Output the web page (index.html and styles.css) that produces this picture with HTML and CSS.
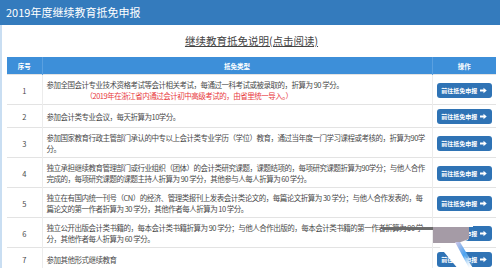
FILE: index.html
```html
<!DOCTYPE html>
<html lang="zh-CN">
<head>
<meta charset="utf-8">
<title>2019年度继续教育抵免申报</title>
<link rel="stylesheet" href="styles.css">
</head>
<body>
<header class="topbar">2019年度继续教育抵免申报</header>
<main class="panel">
  <div class="notice"><a href="#">继续教育抵免说明(点击阅读)</a></div>
  <table class="grid">
    <colgroup><col class="c-no"><col class="c-type"><col class="c-op"></colgroup>
    <thead>
      <tr><th>序号</th><th>抵免类型</th><th>操作</th></tr>
    </thead>
    <tbody>
      <tr>
        <td class="no">1</td>
        <td class="type">参加全国会计专业技术资格考试等会计相关考试，每通过一科考试或被录取的，折算为 90 学分。<span class="red">（2019年在浙江省内通过会计初中高级考试的，由省里统一导入。）</span></td>
        <td class="op"><a class="btn" href="#">前往抵免申报<svg viewBox="0 0 10 10" width="7" height="7"><path d="M0 3.6H5V1L9.6 5 5 9V6.4H0Z" fill="#fff"/></svg></a></td>
      </tr>
      <tr>
        <td class="no">2</td>
        <td class="type">参加会计类专业会议，每天折算为10学分。</td>
        <td class="op"><a class="btn" href="#">前往抵免申报<svg viewBox="0 0 10 10" width="7" height="7"><path d="M0 3.6H5V1L9.6 5 5 9V6.4H0Z" fill="#fff"/></svg></a></td>
      </tr>
      <tr>
        <td class="no">3</td>
        <td class="type">参加国家教育行政主管部门承认的中专以上会计类专业学历（学位）教育，通过当年度一门学习课程或考核的，折算为90学分。</td>
        <td class="op"><a class="btn" href="#">前往抵免申报<svg viewBox="0 0 10 10" width="7" height="7"><path d="M0 3.6H5V1L9.6 5 5 9V6.4H0Z" fill="#fff"/></svg></a></td>
      </tr>
      <tr>
        <td class="no">4</td>
        <td class="type">独立承担继续教育管理部门或行业组织（团体）的会计类研究课题，课题结项的，每项研究课题折算为90学分；与他人合作完成的，每项研究课题的课题主持人折算为 90 学分，其他参与人每人折算为 60 学分。</td>
        <td class="op"><a class="btn" href="#">前往抵免申报<svg viewBox="0 0 10 10" width="7" height="7"><path d="M0 3.6H5V1L9.6 5 5 9V6.4H0Z" fill="#fff"/></svg></a></td>
      </tr>
      <tr>
        <td class="no">5</td>
        <td class="type">独立在有国内统一刊号（CN）的经济、管理类报刊上发表会计类论文的，每篇论文折算为 30 学分；与他人合作发表的，每篇论文的第一作者折算为 30 学分，其他作者每人折算为 10 学分。</td>
        <td class="op"><a class="btn" href="#">前往抵免申报<svg viewBox="0 0 10 10" width="7" height="7"><path d="M0 3.6H5V1L9.6 5 5 9V6.4H0Z" fill="#fff"/></svg></a></td>
      </tr>
      <tr>
        <td class="no">6</td>
        <td class="type">独立公开出版会计类书籍的，每本会计类书籍折算为 90 学分；与他人合作出版的，每本会计类书籍的第一作者折算为 90 学分，其他作者每人折算为 60 学分。</td>
        <td class="op"><a class="btn" href="#">前往抵免申报<svg viewBox="0 0 10 10" width="7" height="7"><path d="M0 3.6H5V1L9.6 5 5 9V6.4H0Z" fill="#fff"/></svg></a></td>
      </tr>
      <tr>
        <td class="no">7</td>
        <td class="type">参加其他形式继续教育</td>
        <td class="op"><a class="btn" href="#">前往抵免申报<svg viewBox="0 0 10 10" width="7" height="7"><path d="M0 3.6H5V1L9.6 5 5 9V6.4H0Z" fill="#fff"/></svg></a></td>
      </tr>
    </tbody>
  </table>
  <div class="smear" aria-hidden="true">
    <span class="smear-bar"></span>
    <svg class="smear-blob" viewBox="0 0 42 46" width="42" height="46">
      <defs>
        <linearGradient id="glow" x1="0" y1="0" x2="1" y2="1">
          <stop offset="0" stop-color="#d6c9e6"/>
          <stop offset="0.5" stop-color="#4aa3f0"/>
          <stop offset="1" stop-color="#ffffff" stop-opacity="0"/>
        </linearGradient>
      </defs>
      <polygon points="1,0 40,0 40,3 35,3 35,16 24,20 40,44 26,46 1,16" fill="#fff"/>
      <polygon points="0,3 36,3 36,15 25,19 0,19" fill="#a59ba6"/>
      <polygon points="22,18 27,18 40,40 36,44" fill="url(#glow)"/>
    </svg>
  </div>
</main>
</body>
</html>
```

FILE: styles.css
```css
html, body {
  margin: 0;
  padding: 0;
  background: #fff;
}

body {
  font-family: "Noto Sans CJK SC", "Noto Sans", sans-serif;
  color: #4a4a4a;
  width: 500px;
  height: 268px;
  overflow: hidden;
}

.topbar {
  height: 25px;
  line-height: 25px;
  background: #347bbd;
  color: #fff;
  font-size: 11px;
  padding-left: 6px;
}

.panel {
  position: relative;
  border-left: 2px solid #c9def2;
  padding: 0 4px 0 5px;
  height: 243px;
  box-sizing: border-box;
}

.notice {
  text-align: center;
  padding: 8px 0 9px;
  line-height: 15px;
  font-size: 10.5px;
}

.notice a {
  color: #444;
  text-decoration: underline;
}

.grid {
  width: 489px;
  border-collapse: collapse;
  table-layout: fixed;
}

.c-no { width: 35px; }
.c-type { width: 390px; }
.c-op { width: 64px; }

.grid th {
  height: 17px;
  padding: 0;
  background: #3d8fd9;
  color: #fff;
  font-size: 6.5px;
  font-weight: bold;
  text-align: center;
  border-right: 1px solid #5aa0e0;
}

.grid th:last-child { border-right: 0; }

.grid td {
  border-top: 1px solid #e3e3e3;
  border-right: 1px solid #ececec;
  padding: 4px 4px 3px;
  font-size: 7.5px;
  letter-spacing: -0.5px;
  line-height: 11px;
  vertical-align: middle;
}

.grid td:last-child { border-right: 0; }

.grid td.no {
  text-align: center;
  letter-spacing: 0;
}

.grid td.type {
  padding-right: 6px;
}

.red {
  display: block;
  color: #e8383d;
  padding-left: 39px;
}

.grid td.op {
  text-align: center;
  padding: 4px 0 3px;
}

.btn {
  display: inline-flex;
  align-items: center;
  justify-content: center;
  gap: 3px;
  width: 55px;
  height: 15px;
  border-radius: 3px;
  background: #2f73b5;
  color: #fff;
  font-size: 6px;
  font-weight: bold;
  letter-spacing: 0;
  text-decoration: none;
  vertical-align: middle;
}

.smear {
  position: absolute;
  left: 378px;
  top: 199px;
  width: 96px;
  height: 46px;
  pointer-events: none;
}

.smear-bar {
  position: absolute;
  left: 2px;
  top: 3px;
  width: 52px;
  height: 3px;
  background: #6c6c6c;
  border-radius: 1px;
}

.smear-blob {
  position: absolute;
  left: 53px;
  top: 0;
}
```
